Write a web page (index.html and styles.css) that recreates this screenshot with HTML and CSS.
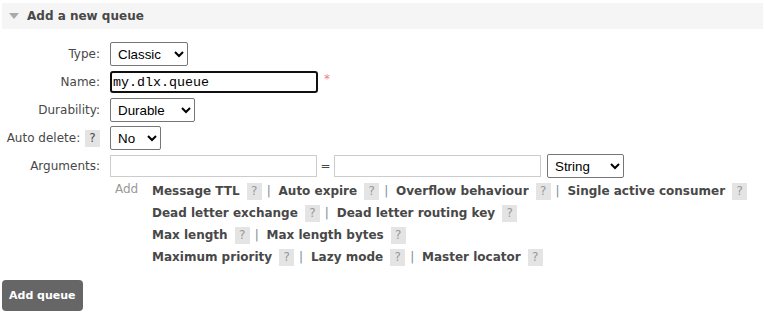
FILE: index.html
```html
<!DOCTYPE html>
<html lang="en">
  <head>
    <meta charset="UTF-8" />
    <title>Add a new queue</title>
    <link rel="stylesheet" href="styles.css">
  </head>

  <body>
    <div class="section">
      <!-- 标题栏 -->
      <h2 class="section-title"><span class="arrow-down"></span>Add a new queue</h2>

      <div class="form">
        <div class="row">
          <label class="label">Type:</label>
          <select class="sel sel-type">
            <option>Classic</option>
            <option>Quorum</option>
          </select>
        </div>
        <div class="row">
          <label class="label">Name:</label>
          <input class="text name-input" type="text" value="my.dlx.queue" />
          <span class="mand">*</span>
        </div>
        <div class="row">
          <label class="label">Durability:</label>
          <select class="sel sel-durable">
            <option>Durable</option>
            <option>Transient</option>
          </select>
        </div>
        <div class="row">
          <label class="label">Auto delete: <span class="help">?</span></label>
          <select class="sel sel-no">
            <option>No</option>
            <option>Yes</option>
          </select>
        </div>
        <div class="row">
          <label class="label">Arguments:</label>
          <input class="text arg" type="text" />
          <span class="equals">=</span>
          <input class="text arg" type="text" />
          <select class="sel sel-string">
            <option>String</option>
            <option>Number</option>
            <option>Boolean</option>
          </select>
        </div>

        <!-- 参数快捷链接 -->
        <div class="args-help">
          <span class="add">Add</span>
          <div class="links">
            <p>
              <a href="#">Message TTL</a><span class="help">?</span><span class="sep">|</span>
              <a href="#">Auto expire</a><span class="help">?</span><span class="sep">|</span>
              <a href="#">Overflow behaviour</a><span class="help">?</span><span class="sep">|</span>
              <a href="#">Single active consumer</a><span class="help">?</span>
            </p>
            <p>
              <a href="#">Dead letter exchange</a><span class="help">?</span><span class="sep">|</span>
              <a href="#">Dead letter routing key</a><span class="help">?</span>
            </p>
            <p>
              <a href="#">Max length</a><span class="help">?</span><span class="sep">|</span>
              <a href="#">Max length bytes</a><span class="help">?</span>
            </p>
            <p>
              <a href="#">Maximum priority</a><span class="help">?</span><span class="sep">|</span>
              <a href="#">Lazy mode</a><span class="help">?</span><span class="sep">|</span>
              <a href="#">Master locator</a><span class="help">?</span>
            </p>
          </div>
        </div>
      </div>

      <button class="btn">Add queue</button>
    </div>
  </body>
</html>
```

FILE: styles.css
```css
* {
  margin: 0;
  padding: 0;
  box-sizing: border-box;
}

body {
  font-family: "DejaVu Sans", Verdana, sans-serif;
  font-size: 12px;
  color: #484848;
  background: #fff;
  padding: 3px 2px;
}

.section-title {
  height: 26px;
  display: flex;
  align-items: center;
  padding-left: 7px;
  background-color: #f5f5f5;
  font-size: 12px;
  font-weight: bold;
  color: #484848;
}

.arrow-down {
  width: 0;
  height: 0;
  border-left: 5px solid transparent;
  border-right: 5px solid transparent;
  border-top: 6px solid #aaa;
  margin-right: 8px;
}

.form {
  margin-top: 11px;
}

.row {
  display: flex;
  align-items: center;
  height: 28px;
}

.label {
  width: 98px;
  text-align: right;
  margin-right: 10px;
  color: #484848;
  white-space: nowrap;
}

.help {
  display: inline-block;
  width: 15px;
  height: 17px;
  line-height: 17px;
  text-align: center;
  background-color: #e4e4e4;
  color: #999;
  font-weight: normal;
  font-size: 12px;
}

.label .help {
  margin-left: 1px;
  color: #484848;
}

.sel {
  font-family: "Liberation Sans", Arial, sans-serif;
  font-size: 13.33px;
  height: 24px;
  color: #000;
  background: #fff;
  border: 1px solid #767676;
  border-radius: 2px;
  padding-left: 3px;
}

.sel-type {
  width: 78px;
}

.sel-durable {
  width: 85px;
}

.sel-no {
  width: 51px;
}

.sel-string {
  width: 77px;
  margin-left: 6px;
}

.text {
  height: 22px;
  border: 1px solid #ccc;
  font-family: "Liberation Mono", "Courier New", monospace;
  font-size: 13.33px;
  padding: 0 2px;
  color: #000;
}

.name-input {
  width: 208px;
  border: 2px solid #101010;
  border-radius: 3px;
  outline: none;
  padding-left: 1px;
}

.mand {
  color: #f08080;
  margin-left: 6px;
  margin-top: -6px;
  font-size: 12px;
}

.arg {
  width: 207px;
}

.equals {
  width: 17px;
  text-align: center;
}

.args-help {
  display: flex;
  margin-left: 113px;
}

.add {
  color: #999;
  width: 37px;
  line-height: 19px;
}

.links p {
  line-height: 22px;
  white-space: nowrap;
}

.links a {
  color: #484848;
  font-weight: bold;
  text-decoration: none;
  margin-right: 7px;
}

.sep {
  color: #7a8a99;
  margin: 0 4px 0 5px;
}

.btn {
  margin-top: 12px;
  background-color: #666;
  color: #fff;
  border: none;
  border-radius: 4px;
  font-family: "DejaVu Sans", Verdana, sans-serif;
  font-size: 11px;
  font-weight: bold;
  height: 31px;
  padding: 0 7px;
}
```
